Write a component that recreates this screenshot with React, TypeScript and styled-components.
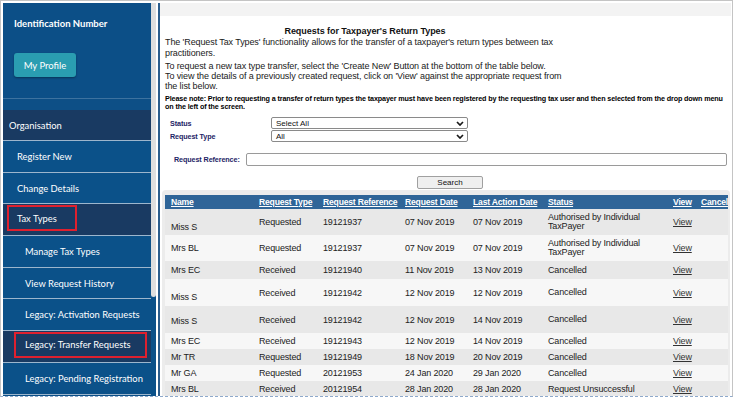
import React from 'react';
import styled, { createGlobalStyle } from 'styled-components';

const textFont = `"Liberation Sans", Arial, sans-serif`;
const navFont = `Lato, "Open Sans", sans-serif`;

interface RequestRow {
  name: string;
  type: string;
  reference: string;
  requested: string;
  lastAction: string;
  status: string;
  height: number;
  nameDrop?: number;
}

const rows: RequestRow[] = [
  { name: 'Miss S', type: 'Requested', reference: '19121937', requested: '07 Nov 2019', lastAction: '07 Nov 2019', status: 'Authorised by Individual TaxPayer', height: 26, nameDrop: 10 },
  { name: 'Mrs BL', type: 'Requested', reference: '19121937', requested: '07 Nov 2019', lastAction: '07 Nov 2019', status: 'Authorised by Individual TaxPayer', height: 26 },
  { name: 'Mrs EC', type: 'Received', reference: '19121940', requested: '11 Nov 2019', lastAction: '13 Nov 2019', status: 'Cancelled', height: 18 },
  { name: 'Miss S', type: 'Received', reference: '19121942', requested: '12 Nov 2019', lastAction: '12 Nov 2019', status: 'Cancelled', height: 27, nameDrop: 8 },
  { name: 'Miss S', type: 'Received', reference: '19121942', requested: '12 Nov 2019', lastAction: '14 Nov 2019', status: 'Cancelled', height: 27, nameDrop: 2 },
  { name: 'Mrs EC', type: 'Received', reference: '19121943', requested: '12 Nov 2019', lastAction: '14 Nov 2019', status: 'Cancelled', height: 16 },
  { name: 'Mr TR', type: 'Requested', reference: '19121949', requested: '18 Nov 2019', lastAction: '20 Nov 2019', status: 'Cancelled', height: 16 },
  { name: 'Mr GA', type: 'Requested', reference: '20121953', requested: '24 Jan 2020', lastAction: '29 Jan 2020', status: 'Cancelled', height: 16 },
  { name: 'Mrs BL', type: 'Received', reference: '20121954', requested: '28 Jan 2020', lastAction: '28 Jan 2020', status: 'Request Unsuccessful', height: 16 },
];

const columns = [88, 64, 82, 68, 75, 125, 28, 33];

function Chevron(): JSX.Element {
  return (
    <svg width="8" height="5" viewBox="0 0 8 5">
      <path d="M1 1 L4 4 L7 1" fill="none" stroke="#1a1a1a" strokeWidth="1.7" />
    </svg>
  );
}

function App(): JSX.Element {
  return (
    <>
      <GlobalStyle />
      <Frame>
        <Sidebar>
          <ProfileArea>
            <IdTitle>Identification Number</IdTitle>
            <ProfileButton>My Profile</ProfileButton>
          </ProfileArea>
          <NavGap />
          <NavItem $pad={6} $dark $h={31}>
            Organisation
          </NavItem>
          <NavItem $pad={14}>Register New</NavItem>
          <NavItem $pad={14}>Change Details</NavItem>
          <NavItem $pad={4} $dark>
            <Highlight $w={70} $inset={8}>
              Tax Types
            </Highlight>
          </NavItem>
          <NavItem $pad={22}>Manage Tax Types</NavItem>
          <NavItem $pad={22}>View Request History</NavItem>
          <NavItem $pad={22}>Legacy: Activation Requests</NavItem>
          <NavItem $pad={11} $dark>
            <Highlight $w={133} $inset={9}>
              Legacy: Transfer Requests
            </Highlight>
          </NavItem>
          <NavItem $pad={22}>Legacy: Pending Registration</NavItem>
        </Sidebar>
        <ScrollTrack>
          <Thumb />
        </ScrollTrack>
        <Gutter />
        <Rule />
        <Main>
          <TopBand />
          <Body>
            <Title>Requests for Taxpayer's Return Types</Title>
            <Paragraph>
              The 'Request Tax Types' functionality allows for the transfer of a taxpayer's return types between tax
              <br />
              practitioners.
            </Paragraph>
            <Paragraph $gap={3} $lh={10}>
              To request a new tax type transfer, select the 'Create New' Button at the bottom of the table below.
              <br />
              To view the details of a previously created request, click on 'View' against the appropriate request from
              <br />
              the list below.
            </Paragraph>
            <Note>
              Please note: Prior to requesting a transfer of return types the taxpayer must have been registered by the
              requesting tax user and then selected from the drop down menu
              <br />
              on the left of the screen.
            </Note>
            <Filters>
              <FilterRow>
                <Label>Status</Label>
                <SelectBox>
                  <span>Select All</span>
                  <Chevron />
                </SelectBox>
              </FilterRow>
              <FilterRow>
                <Label>Request Type</Label>
                <SelectBox>
                  <span>All</span>
                  <Chevron />
                </SelectBox>
              </FilterRow>
            </Filters>
            <ReferenceRow>
              <Label>Request Reference:</Label>
              <TextInput />
            </ReferenceRow>
            <SearchButton>Search</SearchButton>
            <TableWrap>
              <Table>
                <colgroup>
                  {columns.map((w, i) => (
                    <col key={i} style={{ width: w }} />
                  ))}
                </colgroup>
                <thead>
                  <HeadRow>
                    <Th>Name</Th>
                    <Th>Request Type</Th>
                    <Th>Request Reference</Th>
                    <Th>Request Date</Th>
                    <Th>Last Action Date</Th>
                    <Th>Status</Th>
                    <Th>View</Th>
                    <Th>Cancel</Th>
                  </HeadRow>
                </thead>
                <tbody>
                  {rows.map((row, i) => (
                    <Row key={i} $h={row.height} $alt={i % 2 === 1}>
                      <Td $drop={row.nameDrop}>{row.name}</Td>
                      <Td>{row.type}</Td>
                      <Td>{row.reference}</Td>
                      <Td>{row.requested}</Td>
                      <Td>{row.lastAction}</Td>
                      <StatusCell>{row.status}</StatusCell>
                      <Td>
                        <ViewLink>View</ViewLink>
                      </Td>
                      <Td />
                    </Row>
                  ))}
                </tbody>
              </Table>
            </TableWrap>
          </Body>
        </Main>
      </Frame>
    </>
  );
}

const GlobalStyle = createGlobalStyle`
  html, body {
    margin: 0;
    padding: 0;
    background: #fff;
  }
  body {
    font-family: ${textFont};
  }
  * {
    box-sizing: border-box;
  }
`;

const Frame = styled.div`
  width: 733px;
  height: 397px;
  display: flex;
  padding: 2px 1px 0 2px;
  border: 1px solid #c4c4c4;
  border-bottom: 1px dashed #8ea9cb;
  overflow: hidden;
  background: #fff;
`;

const Sidebar = styled.div`
  width: 148px;
  flex: none;
  display: flex;
  flex-direction: column;
  background: #0b5189;
  font-family: ${navFont};
  color: #fff;
`;

const ProfileArea = styled.div`
  height: 96px;
  flex: none;
  padding: 15px 0 0 11px;
  border-bottom: 1px solid #3d729f;
  background: #0c4f87;
`;

const IdTitle = styled.div`
  font-weight: bold;
  font-size: 9.5px;
  line-height: 12px;
`;

const ProfileButton = styled.div`
  width: 62px;
  height: 24px;
  margin-top: 23px;
  display: flex;
  align-items: center;
  justify-content: center;
  background: #2a9db1;
  border-radius: 3px;
  font-size: 9.5px;
  box-shadow: 0 1px 2px rgba(0, 0, 0, 0.35);
`;

const NavGap = styled.div`
  height: 11px;
  flex: none;
  background: #0d4f86;
`;

const NavItem = styled.div<{ $pad: number; $dark?: boolean; $h?: number }>`
  height: ${({ $h }) => $h ?? 31.7}px;
  flex: none;
  display: flex;
  align-items: center;
  padding-left: ${({ $pad }) => $pad}px;
  background: ${({ $dark }) => ($dark ? '#193a62' : '#0b5189')};
  border-bottom: 1px solid #9db6cd;
  font-size: 9.4px;
  white-space: nowrap;
`;

const Highlight = styled.span<{ $w: number; $inset: number }>`
  width: ${({ $w }) => $w}px;
  height: 26px;
  margin-top: -3px;
  display: flex;
  align-items: center;
  padding-left: ${({ $inset }) => $inset}px;
  border: 2px solid #e0202e;
`;

const ScrollTrack = styled.div`
  width: 5px;
  flex: none;
  background: #0b5189;
`;

const Thumb = styled.div`
  height: 294px;
  background: #dedede;
  border-radius: 0 0 3px 3px;
`;

const Gutter = styled.div`
  width: 2px;
  flex: none;
  background: #fff;
`;

const Rule = styled.div`
  width: 2px;
  flex: none;
  background: #2b5d8c;
`;

const Main = styled.div`
  flex: 1;
  display: flex;
  flex-direction: column;
  min-width: 0;
`;

const TopBand = styled.div`
  height: 13px;
  flex: none;
  background: #f3f3f3;
`;

const Body = styled.div`
  padding: 0 1px 0 2px;
  color: #1a1a1a;
`;

const Title = styled.div`
  width: 400px;
  margin: 9px 0 0 3px;
  text-align: center;
  font-weight: bold;
  font-size: 9px;
  letter-spacing: -0.05px;
  line-height: 12px;
  color: #111;
`;

const Paragraph = styled.div<{ $gap?: number; $lh?: number }>`
  margin: ${({ $gap }) => $gap ?? 0}px 0 0 3px;
  font-size: 9px;
  letter-spacing: -0.1px;
  line-height: ${({ $lh }) => $lh ?? 10.5}px;
  white-space: nowrap;
`;

const Note = styled.div`
  margin: 4px 0 0 3px;
  font-weight: bold;
  font-size: 7.2px;
  letter-spacing: -0.12px;
  line-height: 8px;
  color: #000;
  white-space: nowrap;
`;

const Filters = styled.div`
  margin-top: 6px;
  display: flex;
  flex-direction: column;
  gap: 1px;
`;

const FilterRow = styled.div`
  display: grid;
  grid-template-columns: 101px 197px;
  align-items: center;
  height: 12px;
  padding-left: 8px;
`;

const Label = styled.div`
  font-weight: bold;
  font-size: 7.2px;
  letter-spacing: -0.1px;
  color: #1d2466;
  white-space: nowrap;
`;

const SelectBox = styled.div`
  height: 12px;
  display: flex;
  align-items: center;
  justify-content: space-between;
  padding: 0 3px 0 4px;
  border: 1px solid #8a8a8a;
  border-radius: 2px;
  background: #fff;
  font-size: 8px;
  color: #111;
`;

const ReferenceRow = styled.div`
  margin-top: 11px;
  display: grid;
  grid-template-columns: 72px 481px;
  align-items: center;
  height: 13px;
  padding-left: 12px;
`;

const TextInput = styled.div`
  height: 13px;
  border: 1px solid #9a9a9a;
  border-radius: 2px;
  background: #fff;
`;

const SearchButton = styled.div`
  width: 66px;
  height: 13px;
  margin: 10px 0 0 255px;
  display: flex;
  align-items: center;
  justify-content: center;
  background: #efefef;
  border: 1px solid #a0a0a0;
  border-radius: 2px;
  font-size: 8px;
  color: #111;
`;

const TableWrap = styled.div`
  margin-top: 1px;
  padding: 5px 2px 0 3px;
  background: #ececec;
  border-radius: 4px 4px 0 0;
`;

const Table = styled.table`
  width: 563px;
  border-collapse: collapse;
  table-layout: fixed;
  font-size: 9px;
  letter-spacing: -0.15px;
  color: #222;
`;

const HeadRow = styled.tr`
  height: 14px;
  background: #2f6598;
`;

const Th = styled.th`
  padding: 0 0 0 6px;
  text-align: left;
  font-weight: bold;
  font-size: 8.6px;
  letter-spacing: -0.2px;
  line-height: 12px;
  color: #fff;
  text-decoration: underline;
  white-space: nowrap;
`;

const Row = styled.tr<{ $h: number; $alt: boolean }>`
  height: ${({ $h }) => $h}px;
  background: ${({ $alt }) => ($alt ? '#f7f7f7' : '#e8e8e8')};
`;

const Td = styled.td<{ $drop?: number }>`
  padding: ${({ $drop }) => $drop ?? 0}px 0 0 6px;
  vertical-align: middle;
  line-height: 12px;
  white-space: nowrap;
  overflow: hidden;
`;

const StatusCell = styled.td`
  padding: 0 4px 0 6px;
  vertical-align: middle;
  line-height: 9px;
`;

const ViewLink = styled.span`
  color: #333;
  text-decoration: underline;
`;

export default App;
